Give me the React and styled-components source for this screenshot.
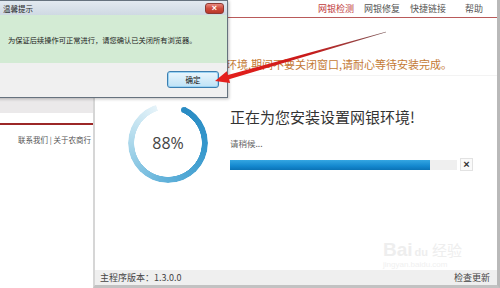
import React from 'react'
import styled, { createGlobalStyle } from 'styled-components'

const GlobalStyle = createGlobalStyle`
    html, body {
        margin: 0;
        padding: 0;
        background: #fff;
    }
    body {
        font-family: "Noto Sans CJK SC", "Liberation Sans", sans-serif;
        color: #333;
    }
`

const progress = 88

function App() {
  return (
    <Screen>
        <GlobalStyle />
        <LeftPanel>
            <Band />
            <RedRule />
            <SideLinks>联系我们 | 关于农商行</SideLinks>
        </LeftPanel>

        <MainWindow>
            <NavBar>
                <NavItem $active>网银检测</NavItem>
                <NavItem>网银修复</NavItem>
                <NavItem>快捷链接</NavItem>
                <NavItem>帮助</NavItem>
            </NavBar>
            <Notice>正在为您安装网银环境,期间不要关闭窗口,请耐心等待安装完成。</Notice>
            <Body>
                <Ring>
                    <Percent>{progress}%</Percent>
                </Ring>
                <Info>
                    <Title>正在为您安装设置网银环境!</Title>
                    <Hint>请稍候...</Hint>
                    <ProgressRow>
                        <Track>
                            <Fill style={{ width: `${progress}%` }} />
                        </Track>
                        <CancelBox>×</CancelBox>
                    </ProgressRow>
                </Info>
            </Body>
            <StatusBar>
                <span>主程序版本：1.3.0.0</span>
                <span>检查更新</span>
            </StatusBar>
            <Watermark>
                <WmBig>Bai</WmBig><WmPaw>du</WmPaw><WmCn>经验</WmCn>
                <WmUrl>jingyan.baidu.com</WmUrl>
            </Watermark>
        </MainWindow>

        <Dialog>
            <TitleBar>
                <span>温馨提示</span>
                <CloseBtn>×</CloseBtn>
            </TitleBar>
            <DialogBody>为保证后续操作可正常进行，请您确认已关闭所有浏览器。</DialogBody>
            <DialogFoot>
                <OkButton>确定</OkButton>
            </DialogFoot>
        </Dialog>

        <ArrowLayer width="500" height="288" viewBox="0 0 500 288">
            <defs>
                <linearGradient id="arrowGrad" gradientUnits="userSpaceOnUse" x1="215" y1="81" x2="386" y2="32">
                    <stop offset="0" stopColor="#e8201c" />
                    <stop offset="0.55" stopColor="#c81a1a" />
                    <stop offset="1" stopColor="#7a5858" />
                </linearGradient>
            </defs>
            <polygon
                fill="url(#arrowGrad)"
                points="215,81 230.1,82.9 229.1,79.2 386.1,32.3 385.9,31.7 227.9,75 226.8,71.3"
            />
        </ArrowLayer>
    </Screen>
  )
}

const Screen = styled.div`
    position: relative;
    display: flex;
    width: 500px;
    height: 288px;
    overflow: hidden;
    background: #fff;
`

const LeftPanel = styled.div`
    width: 93px;
    flex-shrink: 0;
    padding-top: 98px;
    display: flex;
    flex-direction: column;
`

const Band = styled.div`
    height: 15px;
    background: #ebe9ea;
`

const RedRule = styled.div`
    height: 2px;
    margin-top: 10px;
    background: #9c2727;
`

const SideLinks = styled.div`
    margin-top: 9px;
    padding-right: 2px;
    text-align: right;
    font-size: 7.5px;
    line-height: 12px;
    color: #555;
    white-space: nowrap;
`

const MainWindow = styled.div`
    position: relative;
    flex: 1;
    display: flex;
    flex-direction: column;
    border-left: 2px solid #d6d6d6;
    border-right: 3px solid #b9b9b9;
    border-bottom: 3px solid #c2c2c2;
`

const NavBar = styled.div`
    height: 17px;
    display: flex;
    justify-content: flex-end;
    align-items: center;
    border-bottom: 1px solid #b95a5a;
`

const NavItem = styled.div`
    width: 46px;
    text-align: center;
    font-size: 9px;
    line-height: 1;
    color: ${p => (p.$active ? '#c0393b' : '#555')};
`

const Notice = styled.div`
    padding: 38px 0 3px 43px;
    font-size: 11px;
    line-height: 16px;
    color: #c47a35;
    white-space: nowrap;
    border-bottom: 1px solid #f3f3f3;
`

const Body = styled.div`
    flex: 1;
    display: flex;
    align-items: flex-start;
    padding-top: 27px;
`

const Ring = styled.div`
    position: relative;
    width: 80px;
    height: 80px;
    margin-left: 33px;
    flex-shrink: 0;
    display: flex;
    align-items: center;
    justify-content: center;

    &::before {
        content: '';
        position: absolute;
        inset: 0;
        border-radius: 50%;
        background: conic-gradient(from 26deg,
            #2a8bc3 0deg, #3597cc 70deg, #62b2da 160deg,
            #a8d6ea 240deg, #e6f3f9 316deg, transparent 317deg);
        -webkit-mask: radial-gradient(circle, transparent 33.5px, #000 34px);
        mask: radial-gradient(circle, transparent 33.5px, #000 34px);
    }
    &::after {
        content: '';
        position: absolute;
        left: 53.2px;
        top: 3.7px;
        width: 6px;
        height: 6px;
        border-radius: 50%;
        background: #2a8bc3;
    }
`

const Percent = styled.span`
    font-family: "Open Sans", "Liberation Sans", sans-serif;
    font-size: 16px;
    color: #444;
    line-height: 1;
`

const Info = styled.div`
    margin-left: 22px;
    padding-top: 5px;
    display: flex;
    flex-direction: column;
`

const Title = styled.div`
    font-size: 15px;
    line-height: 18px;
    color: #333;
    white-space: nowrap;
`

const Hint = styled.div`
    margin-top: 11px;
    font-size: 8.5px;
    line-height: 12px;
    color: #666;
`

const ProgressRow = styled.div`
    margin-top: 9px;
    display: flex;
    align-items: center;
`

const Track = styled.div`
    width: 227px;
    height: 10px;
    background: #efefef;
`

const Fill = styled.div`
    height: 100%;
    background: linear-gradient(#34a6e2, #1488cf 60%, #0b73b6);
`

const CancelBox = styled.div`
    margin-left: 3px;
    width: 11px;
    height: 11px;
    border: 1px solid #e2e2e2;
    background: #fafafa;
    display: flex;
    align-items: center;
    justify-content: center;
    font-family: "Liberation Sans", sans-serif;
    font-size: 11px;
    font-weight: bold;
    line-height: 1;
    color: #333;
`

const StatusBar = styled.div`
    height: 15px;
    display: flex;
    align-items: center;
    justify-content: space-between;
    padding: 0 7px 0 5px;
    background: #efefef;
    font-size: 9px;
    color: #444;
`

const Watermark = styled.div`
    position: absolute;
    left: 288px;
    top: 240px;
    width: 90px;
    color: #eeeeee;
    line-height: 1;
    pointer-events: none;
`

const WmBig = styled.span`
    font-family: "Liberation Sans", sans-serif;
    font-size: 19px;
    font-weight: bold;
`

const WmPaw = styled.span`
    font-family: "Liberation Sans", sans-serif;
    font-size: 11px;
    font-weight: bold;
    margin: 0 4px 0 2px;
`

const WmCn = styled.span`
    font-size: 15px;
`

const WmUrl = styled.div`
    font-family: "Liberation Sans", sans-serif;
    font-size: 8px;
    margin-top: 2px;
    color: #f0f0f0;
`

const Dialog = styled.div`
    position: absolute;
    left: -6px;
    top: 0;
    width: 232px;
    height: 96px;
    display: flex;
    flex-direction: column;
    border: 1px solid #66727e;
    box-shadow: 1px 1px 3px rgba(0, 0, 0, 0.25);
    background: #f0f0f0;
`

const TitleBar = styled.div`
    height: 14px;
    display: flex;
    align-items: center;
    justify-content: space-between;
    padding: 0 3px 0 8px;
    background: linear-gradient(#e2e9f0, #cfd9e3);
    font-size: 7.5px;
    color: #1e1e1e;
`

const CloseBtn = styled.div`
    width: 19px;
    height: 11px;
    border-radius: 3px;
    border: 1px solid #8c3a33;
    box-sizing: border-box;
    background: linear-gradient(#e8877c, #cf4b3c 50%, #b9372a);
    color: #fff;
    font-family: "Liberation Sans", sans-serif;
    font-size: 9px;
    font-weight: bold;
    line-height: 9px;
    text-align: center;
`

const DialogBody = styled.div`
    height: 48px;
    box-sizing: border-box;
    padding: 20px 0 0 13px;
    background: #d3ebd4;
    font-size: 7.25px;
    line-height: 10px;
    color: #222;
    white-space: nowrap;
`

const DialogFoot = styled.div`
    flex: 1;
    display: flex;
    justify-content: flex-end;
    align-items: flex-start;
    padding: 8px 8px 0 0;
    background: #f0f0f0;
`

const OkButton = styled.div`
    width: 52px;
    height: 17px;
    box-sizing: border-box;
    border: 1px solid #3c7fb1;
    border-radius: 3px;
    background: linear-gradient(#eaf6fd, #d4ecf9 50%, #bfe2f6);
    box-shadow: inset 0 0 0 1px #9bd3f3;
    display: flex;
    align-items: center;
    justify-content: center;
    font-size: 7.5px;
    color: #111;
`

const ArrowLayer = styled.svg`
    position: absolute;
    left: 0;
    top: 0;
    pointer-events: none;
`

export default App
